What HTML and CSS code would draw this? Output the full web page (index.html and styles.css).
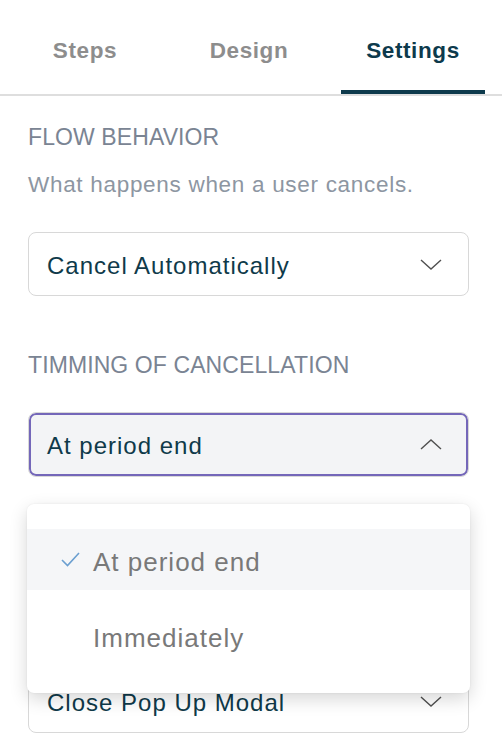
FILE: index.html
```html
<!DOCTYPE html>
<html lang="en">
<head>
<meta charset="utf-8">
<title>Settings</title>
<link rel="stylesheet" href="styles.css">
</head>
<body>
<nav class="tabs">
  <div class="tab">Steps</div>
  <div class="tab">Design</div>
  <div class="tab tab--active">Settings</div>
</nav>
<main class="panel">
  <section class="field">
    <div class="field-label">FLOW BEHAVIOR</div>
    <div class="field-desc">What happens when a user cancels.</div>
    <div class="select">
      <span class="select-value">Cancel Automatically</span>
      <svg class="chevron" width="22" height="11" viewBox="0 0 22 11"><path d="M1 1 L11 10 L21 1" /></svg>
    </div>
  </section>
  <section class="field">
    <div class="field-label">TIMMING OF CANCELLATION</div>
    <div class="select-wrap">
      <div class="select select--open">
        <span class="select-value">At period end</span>
        <svg class="chevron" width="22" height="11" viewBox="0 0 22 11"><path d="M1 10 L11 1 L21 10" /></svg>
      </div>
      <ul class="menu">
        <li class="option option--selected">
          <span class="option-check"><svg width="19" height="15" viewBox="0 0 19 15"><path d="M1 8 L6.5 13.5 L18 1" /></svg></span>
          <span>At period end</span>
        </li>
        <li class="option">
          <span class="option-check"></span>
          <span>Immediately</span>
        </li>
      </ul>
    </div>
  </section>
  <section class="field field--covered">
    <div class="select select--flush">
      <span class="select-value">Close Pop Up Modal</span>
      <svg class="chevron" width="22" height="11" viewBox="0 0 22 11"><path d="M1 1 L11 10 L21 1" /></svg>
    </div>
  </section>
</main>
</body>
</html>
```

FILE: styles.css
```css
html, body {
  margin: 0;
  padding: 0;
  background: #ffffff;
}

body {
  font-family: "Liberation Sans", Arial, Helvetica, sans-serif;
  width: 502px;
  height: 747px;
  overflow: hidden;
}

.tabs {
  display: flex;
  padding-left: 3px;
  border-bottom: 2px solid #dedede;
}

.tab {
  flex: 0 0 144px;
  margin: 0 10px;
  padding: 38px 0 26px;
  border-bottom: 4px solid transparent;
  text-align: center;
  font-size: 22.5px;
  line-height: 26px;
  font-weight: 700;
  letter-spacing: 0.6px;
  color: #8d8d8d;
}

.tab--active {
  color: #0d3a4c;
  border-bottom-color: #0d3a4c;
}

.panel {
  padding: 28px 33px 0 28px;
}

.field + .field {
  margin-top: 56px;
}

.field + .field--covered {
  margin-top: 192px;
}

.field-label {
  font-size: 23px;
  line-height: 26px;
  letter-spacing: 0.1px;
  color: #7a8493;
}

.field-desc {
  margin-top: 21px;
  font-size: 22.5px;
  line-height: 28px;
  letter-spacing: 0.7px;
  color: #8d96a2;
}

.select-wrap {
  position: relative;
}

.select {
  margin-top: 34px;
  height: 64px;
  box-sizing: border-box;
  display: flex;
  align-items: center;
  justify-content: space-between;
  padding: 0 26px 0 18px;
  border: 1.5px solid #d8d8d8;
  border-radius: 8px;
  background: #ffffff;
  font-size: 24px;
  line-height: 28px;
  letter-spacing: 1px;
  color: #0f3a4a;
}

.field-desc + .select {
  margin-top: 33px;
}

.select.select--flush {
  margin-top: 0;
}

.select-value {
  padding-top: 3px;
}

.select--open {
  height: 65px;
  background: #f3f4f6;
  box-shadow: inset 0 0 0 2px #7467b9;
}

.chevron {
  display: block;
  flex: none;
}

.chevron path {
  fill: none;
  stroke: #505050;
  stroke-width: 1.4;
}

.menu {
  position: absolute;
  top: calc(100% + 27px);
  left: -1px;
  right: -1px;
  z-index: 2;
  margin: 0;
  padding: 25px 0 27px;
  list-style: none;
  background: #ffffff;
  border-radius: 7px;
  box-shadow: 0 6px 18px rgba(0, 0, 0, 0.16), 0 0 2px rgba(0, 0, 0, 0.08);
}

.option {
  height: 61px;
  box-sizing: border-box;
  display: flex;
  align-items: center;
  padding: 4px 0 0 34px;
  font-size: 26px;
  line-height: 30px;
  letter-spacing: 1px;
  color: #797979;
}

.option + .option {
  margin-top: 15px;
}

.option--selected {
  background: #f5f6f8;
}

.option-check {
  flex: 0 0 32px;
  display: flex;
  align-items: center;
  margin-top: -4px;
}

.option-check svg {
  display: block;
}

.option-check path {
  fill: none;
  stroke: #6b9fd0;
  stroke-width: 1.6;
}
```
